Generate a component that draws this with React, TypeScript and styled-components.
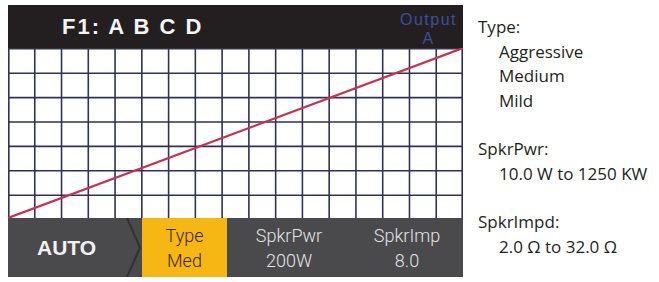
import React from "react";
import styled, { createGlobalStyle } from "styled-components";

const Global = createGlobalStyle`
  html, body { margin: 0; padding: 0; background: #ffffff; }
  body { width: 659px; height: 282px; overflow: hidden; }
`;

const Page = styled.div`
  display: flex;
  align-items: flex-start;
  padding: 5px 0 0 8px;
`;

const Screen = styled.div`
  width: 455px;
  display: flex;
  flex-direction: column;
`;

const Header = styled.div`
  height: 43px;
  background: #231f20;
  display: flex;
  align-items: center;
  justify-content: space-between;
  padding: 0 6px 0 54px;
`;

const Title = styled.div`
  font-family: "Liberation Sans", Arial, sans-serif;
  font-weight: 700;
  font-size: 22px;
  letter-spacing: 2px;
  color: #f4f4f4;
`;

const Output = styled.div`
  align-self: flex-start;
  margin-top: 5px;
  display: flex;
  flex-direction: column;
  align-items: center;
  font-family: "Liberation Sans", Arial, sans-serif;
  font-size: 16px;
  letter-spacing: 1.5px;
  line-height: 19px;
  color: #3e4c9e;
`;

const Grid = styled.svg`
  display: block;
  width: 455px;
  height: 170px;
  background: #ffffff;
`;

const Bar = styled.div`
  height: 59px;
  background: #4a4a4c;
  display: flex;
  align-items: stretch;
`;

const Auto = styled.div`
  position: relative;
  width: 134px;
  display: flex;
  align-items: center;
  padding-left: 29px;
  box-sizing: border-box;
  font-family: "Liberation Sans", Arial, sans-serif;
  font-weight: 700;
  font-size: 21px;
  color: #f2f2f2;
`;

const Chevron = styled.svg`
  position: absolute;
  right: 0;
  top: 0;
  width: 24px;
  height: 59px;
`;

const Cell = styled.div<{ $w: number; $active?: boolean }>`
  width: ${(p) => p.$w}px;
  display: flex;
  flex-direction: column;
  align-items: center;
  justify-content: center;
  background: ${(p) => (p.$active ? "#f6b614" : "transparent")};
  color: ${(p) => (p.$active ? "#3b2a0c" : "#e4e4e4")};
  font-family: "Roboto", "Liberation Sans", sans-serif;
  font-weight: 300;
  font-size: 18px;
  line-height: 25px;
  padding-top: 1px;
`;

const Legend = styled.div`
  margin-left: 15px;
  margin-top: 10px;
  font-family: "Open Sans", "Noto Sans", sans-serif;
  font-size: 17px;
  line-height: 24.5px;
  color: #231f20;
`;

const Group = styled.div`
  margin-bottom: 24px;
`;

const Label = styled.div``;

const Item = styled.div`
  padding-left: 21px;
`;

const COLS = 17;
const ROWS = 7;
const W = 455;
const H = 170;

function Chart() {
  const cw = W / COLS;
  const rh = 24.4;
  const v = Array.from({ length: COLS + 1 }, (_, i) => Math.min(Math.max(i * cw, 0.8), W - 0.8));
  const h = Array.from({ length: ROWS }, (_, i) => 0.8 + i * rh);
  return (
    <Grid viewBox={`0 0 ${W} ${H}`}>
      {v.map((x, i) => (
        <line key={"v" + i} x1={x} y1={0} x2={x} y2={H} stroke="#2f3158" strokeWidth={1.6} />
      ))}
      {h.map((y, i) => (
        <line key={"h" + i} x1={0} y1={y} x2={W} y2={y} stroke="#2f3158" strokeWidth={1.6} />
      ))}
      <line x1={0} y1={H} x2={W} y2={0} stroke="#c9304a" strokeWidth={2.2} />
    </Grid>
  );
}

export default function App() {
  return (
    <>
      <Global />
      <Page>
        <Screen>
          <Header>
            <Title>F1: A B C D</Title>
            <Output>
              <span>Output</span>
              <span>A</span>
            </Output>
          </Header>
          <Chart />
          <Bar>
            <Auto>
              AUTO
              <Chevron viewBox="0 0 24 59">
                <polyline points="9,0 22,29.5 9,59" fill="none" stroke="#323234" strokeWidth={2} />
              </Chevron>
            </Auto>
            <Cell $w={85} $active>
              <span>Type</span>
              <span>Med</span>
            </Cell>
            <Cell $w={124}>
              <span>SpkrPwr</span>
              <span>200W</span>
            </Cell>
            <Cell $w={112}>
              <span>SpkrImp</span>
              <span>8.0</span>
            </Cell>
          </Bar>
        </Screen>
        <Legend>
          <Group>
            <Label>Type:</Label>
            <Item>Aggressive</Item>
            <Item>Medium</Item>
            <Item>Mild</Item>
          </Group>
          <Group>
            <Label>SpkrPwr:</Label>
            <Item>10.0 W to 1250 KW</Item>
          </Group>
          <Group>
            <Label>SpkrImpd:</Label>
            <Item>2.0 Ω to 32.0 Ω</Item>
          </Group>
        </Legend>
      </Page>
    </>
  );
}
